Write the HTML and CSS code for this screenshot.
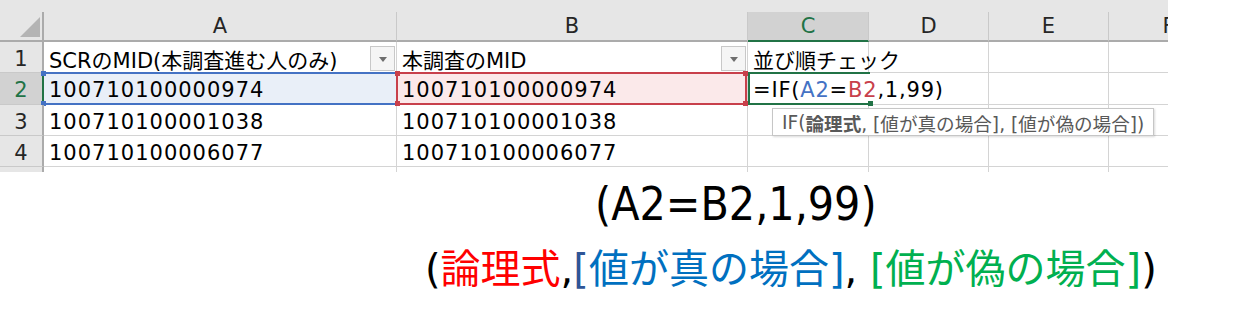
FILE: index.html
```html
<!DOCTYPE html>
<html>
<head>
    <title>IF関数</title>
    <link rel="stylesheet" href="styles.css">
</head>
<body>
    <div class="sheet">
        <div class="top-strip"></div>
        <div class="grid">
            <!-- column headers -->
            <div class="cell corner"><span class="corner-mark"></span></div>
            <div class="cell col-head">A</div>
            <div class="cell col-head">B</div>
            <div class="cell col-head selected">C</div>
            <div class="cell col-head">D</div>
            <div class="cell col-head">E</div>
            <div class="cell col-head">F</div>

            <!-- row 1 -->
            <div class="cell row-head">1</div>
            <div class="cell has-filter">SCRのMID(本調査進む人のみ)<span class="filter"></span></div>
            <div class="cell has-filter">本調査のMID<span class="filter"></span></div>
            <div class="cell">並び順チェック</div>
            <div class="cell"></div>
            <div class="cell"></div>
            <div class="cell"></div>

            <!-- row 2 -->
            <div class="cell row-head selected">2</div>
            <div class="cell num ref-cell-a">100710100000974
                <div class="ref ref-a">
                    <span class="handle tl"></span><span class="handle bl"></span>
                </div>
            </div>
            <div class="cell num ref-cell-b">100710100000974
                <div class="ref ref-b">
                    <span class="handle tl"></span><span class="handle tr"></span>
                    <span class="handle bl"></span><span class="handle br"></span>
                </div>
            </div>
            <div class="cell active">=IF(<span class="c-a">A2</span>=<span class="c-b">B2</span>,1,99)
                <div class="ref ref-active"><span class="handle br"></span></div>
            </div>
            <div class="cell"></div>
            <div class="cell"></div>
            <div class="cell"></div>

            <!-- row 3 -->
            <div class="cell row-head">3</div>
            <div class="cell num">100710100001038</div>
            <div class="cell num">100710100001038</div>
            <div class="cell"></div>
            <div class="cell"></div>
            <div class="cell"></div>
            <div class="cell"></div>

            <!-- row 4 -->
            <div class="cell row-head">4</div>
            <div class="cell num">100710100006077</div>
            <div class="cell num">100710100006077</div>
            <div class="cell"></div>
            <div class="cell"></div>
            <div class="cell"></div>
            <div class="cell"></div>

            <!-- row 5 (cut off) -->
            <div class="cell row-head cut"></div>
            <div class="cell cut"></div>
            <div class="cell cut"></div>
            <div class="cell cut"></div>
            <div class="cell cut"></div>
            <div class="cell cut"></div>
            <div class="cell cut"></div>
        </div>

        <div class="tooltip">IF(<b>論理式</b>, [値が真の場合], [値が偽の場合])</div>
    </div>

    <div class="note">
        <p class="formula">(A2=B2,1,99)</p>
        <p class="args">(<span class="red">論理式</span>,<span class="navy">[</span><span class="blue">値が真の場合]</span>, <span class="green">[値が偽の場合]</span>)</p>
    </div>
</body>
</html>
```

FILE: styles.css
```css
body {
    margin: 0;
    background: #fff;
    font-family: "DejaVu Sans", "Noto Sans CJK JP", sans-serif;
}

.sheet {
    position: relative;
    width: 1168px;
    overflow: hidden;
}

.top-strip {
    height: 12px;
    background: #e6e6e6;
}

.grid {
    display: grid;
    grid-template-columns: 44px 353px 351px 121px 120px 120px 120px;
    grid-template-rows: 30px 31px 32px 31px 31px 5px;
    font-size: 21px;
}

.cell {
    position: relative;
    box-sizing: border-box;
    display: flex;
    align-items: center;
    padding: 3px 5px 0;
    white-space: nowrap;
    color: #000;
    border-right: 1px solid #d4d4d4;
    border-bottom: 1px solid #d4d4d4;
}

.cell.cut {
    border-bottom: none;
}

.num {
    letter-spacing: 1px;
}

/* headers */
.corner {
    align-items: flex-end;
    justify-content: flex-end;
    padding: 0 2px 3px 0;
    background: #e6e6e6;
    border-right: 2px solid #ababab;
    border-bottom: 2px solid #ababab;
}

.corner-mark {
    width: 0;
    height: 0;
    border-left: 20px solid transparent;
    border-bottom: 20px solid #b4b4b4;
}

.col-head {
    justify-content: center;
    padding: 0;
    background: #e6e6e6;
    color: #262626;
    border-right-color: #c9c9c9;
    border-bottom: 2px solid #ababab;
}

.row-head {
    justify-content: center;
    padding: 3px 0 0;
    background: #e6e6e6;
    color: #262626;
    border-right: 2px solid #ababab;
    border-bottom-color: #c9c9c9;
}

.col-head.selected {
    background: #d2d2d2;
    color: #217346;
    border-bottom-color: #217346;
}

.row-head.selected {
    background: #d2d2d2;
    color: #217346;
    border-right-color: #217346;
}

/* filter buttons */
.has-filter {
    padding-right: 1px;
}

.filter {
    box-sizing: border-box;
    display: flex;
    align-items: center;
    justify-content: center;
    width: 25px;
    height: 25px;
    margin-left: auto;
    background: #f5f5f5;
    border: 1px solid #c8c8c8;
}

.filter::before {
    content: "";
    border-top: 5px solid #6e6e6e;
    border-left: 4px solid transparent;
    border-right: 4px solid transparent;
    margin-top: 2px;
}

/* reference highlights */
.ref-cell-a {
    background: #e9eff8;
}

.ref-cell-b {
    background: #fbe9ea;
}

.active {
    border-right: none;
    overflow: visible;
    letter-spacing: 0.8px;
    z-index: 2;
}

.c-a {
    color: #4472c4;
}

.c-b {
    color: #c8404b;
}

.ref {
    position: absolute;
    box-sizing: border-box;
    pointer-events: none;
}

.ref-a {
    top: -1px;
    left: 0;
    right: 0;
    bottom: -1px;
    border-top: 2px solid #4472c4;
    border-bottom: 2px solid #4472c4;
    color: #4472c4;
}

.ref-b {
    top: -1px;
    left: -1px;
    right: 0;
    bottom: -1px;
    border: 2px solid #c8404b;
    color: #c8404b;
    z-index: 1;
}

.ref-active {
    top: -1px;
    left: 0;
    right: -1px;
    bottom: -1px;
    border-top: 2px solid #217346;
    border-left: 2px solid #217346;
    border-bottom: 2px solid #217346;
    color: #217346;
}

.handle {
    position: absolute;
    width: 5px;
    height: 5px;
    background: currentColor;
}

.tl { top: -3px; left: -3px; }
.tr { top: -3px; right: -3px; }
.bl { bottom: -3px; left: -3px; }
.br { bottom: -3px; right: -3px; }

/* function tooltip */
.tooltip {
    position: absolute;
    left: 772px;
    top: 108px;
    box-sizing: border-box;
    display: flex;
    align-items: center;
    width: 382px;
    height: 28px;
    padding-left: 9px;
    background: #fff;
    border: 1px solid #c6c6c6;
    box-shadow: 1px 1px 2px rgba(0, 0, 0, 0.15);
    color: #595959;
    font-size: 18.6px;
    white-space: nowrap;
    z-index: 3;
}

.tooltip b {
    font-weight: bold;
}

/* explanation below */
.note {
    padding-top: 8px;
}

.formula {
    margin: 0;
    padding-left: 595px;
    font-family: "DejaVu Sans Condensed", "DejaVu Sans", sans-serif;
    font-size: 46px;
    line-height: 48px;
    color: #000;
}

.args {
    margin: 17px 0 0;
    padding-left: 425px;
    font-size: 40px;
    line-height: 48px;
    color: #000;
}

.red {
    color: #ff0000;
}

.navy {
    color: #2f5597;
}

.blue {
    color: #0070c0;
}

.green {
    color: #00b050;
}
```
